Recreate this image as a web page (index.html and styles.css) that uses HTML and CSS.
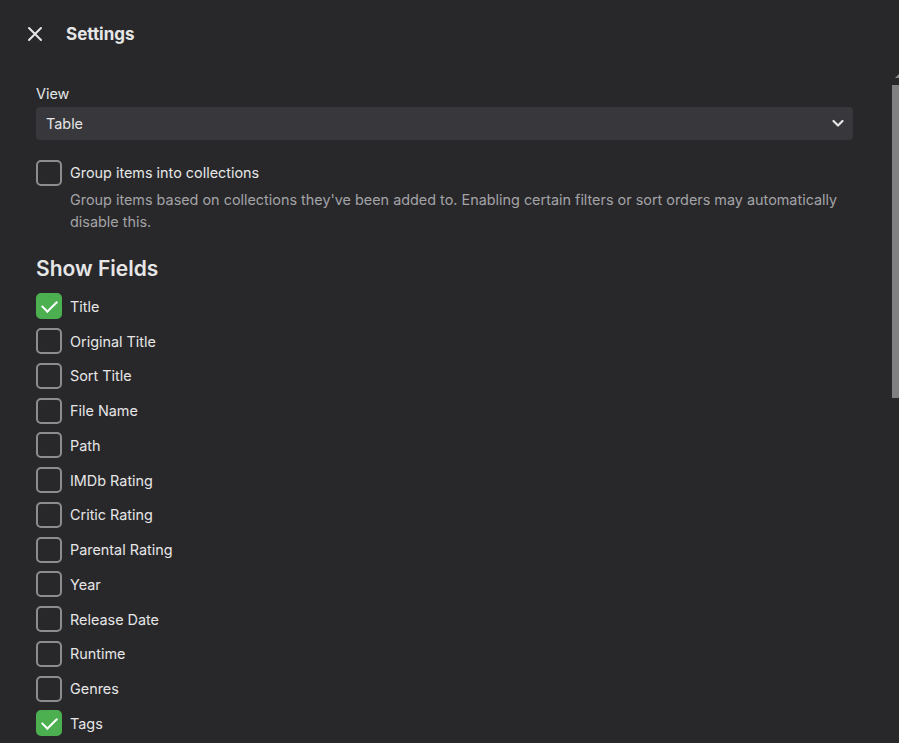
FILE: index.html
```html
<!DOCTYPE html>
<html lang="en">
<head>
<meta charset="utf-8" />
<meta name="viewport" content="width=device-width, initial-scale=1" />
<title>Settings</title>
<link rel="stylesheet" href="styles.css">
</head>
<body>
<header class="top-bar">
<button class="close-btn" aria-label="Close">
<svg width="16" height="16" viewBox="0 0 16 16" fill="none" stroke="currentColor" stroke-width="2" stroke-linecap="round"><path d="M2 2 L14 14 M14 2 L2 14"/></svg>
</button>
<h1 class="top-title">Settings</h1>
</header>

<div class="body-row">
<main class="scroller">
<div class="content">
<label class="field-label" for="view">View</label>
<div class="select-wrap">
<select id="view" class="select">
<option>Table</option>
<option>Poster</option>
<option>List</option>
</select>
<svg class="select-arrow" width="14" height="14" viewBox="0 0 14 14" fill="none" stroke="currentColor" stroke-width="2.2" stroke-linecap="round" stroke-linejoin="round"><path d="M2.5 5 L7 9.5 L11.5 5"/></svg>
</div>

<div class="option">
<label class="check-row">
<input type="checkbox" class="check">
<span class="check-text">Group items into collections</span>
</label>
<p class="option-desc">Group items based on collections they've been added to. Enabling certain filters or sort orders may automatically disable this.</p>
</div>

<h2 class="section-title">Show Fields</h2>
<div class="field-list">
<label class="check-row"><input type="checkbox" class="check" checked><span class="check-text">Title</span></label>
<label class="check-row"><input type="checkbox" class="check"><span class="check-text">Original Title</span></label>
<label class="check-row"><input type="checkbox" class="check"><span class="check-text">Sort Title</span></label>
<label class="check-row"><input type="checkbox" class="check"><span class="check-text">File Name</span></label>
<label class="check-row"><input type="checkbox" class="check"><span class="check-text">Path</span></label>
<label class="check-row"><input type="checkbox" class="check"><span class="check-text">IMDb Rating</span></label>
<label class="check-row"><input type="checkbox" class="check"><span class="check-text">Critic Rating</span></label>
<label class="check-row"><input type="checkbox" class="check"><span class="check-text">Parental Rating</span></label>
<label class="check-row"><input type="checkbox" class="check"><span class="check-text">Year</span></label>
<label class="check-row"><input type="checkbox" class="check"><span class="check-text">Release Date</span></label>
<label class="check-row"><input type="checkbox" class="check"><span class="check-text">Runtime</span></label>
<label class="check-row"><input type="checkbox" class="check"><span class="check-text">Genres</span></label>
<label class="check-row"><input type="checkbox" class="check" checked><span class="check-text">Tags</span></label>
</div>
</div>
</main>
<div class="scroll-rail" aria-hidden="true">
<span class="rail-arrow up"></span>
<div class="rail-track"><div class="rail-thumb"></div></div>
<span class="rail-arrow down"></span>
</div>
</div>
</body>
</html>
```

FILE: styles.css
```css
:root {
--bg: #28282b;
--text: #e6e6e6;
--text-muted: #a3a3a6;
--field-bg: #38383c;
--check-border: #8d8d90;
--green: #4caf50;
}
* {
box-sizing: border-box;
}
html, body {
height: 100%;
}
body {
margin: 0;
background: var(--bg);
color: var(--text);
font-family: Inter, "Noto Sans", sans-serif;
font-size: 14.4px;
display: flex;
flex-direction: column;
overflow: hidden;
}
.top-bar {
height: 70px;
flex: none;
display: flex;
align-items: center;
padding: 0 0 2px 26px;
}
.close-btn {
background: none;
border: none;
color: var(--text);
padding: 0;
width: 18px;
height: 18px;
display: flex;
align-items: center;
justify-content: center;
cursor: pointer;
}
.top-title {
margin: 0 0 0 22px;
font-size: 17px;
font-weight: 700;
}
.body-row {
flex: 1;
min-height: 0;
display: flex;
}
.scroller {
flex: 1;
overflow: hidden;
}
.content {
padding: 14px 39px 20px 36px;
}
.scroll-rail {
width: 7px;
flex: none;
display: flex;
flex-direction: column;
}
.rail-arrow {
height: 15px;
flex: none;
display: flex;
justify-content: flex-end;
}
.rail-arrow.up::after {
content: "";
margin-top: 4px;
width: 0;
height: 0;
border-left: 4px solid transparent;
border-right: 0;
border-bottom: 4px solid #8a8a8a;
}
.rail-track {
flex: 1;
}
.rail-thumb {
height: 313px;
background: #808080;
}
.field-label {
display: block;
font-size: 14.4px;
line-height: 20px;
}
.select-wrap {
position: relative;
margin-top: 3px;
}
.select {
width: 100%;
height: 33px;
appearance: none;
border: none;
border-radius: 4px;
background: var(--field-bg);
color: var(--text);
font: inherit;
padding: 0 10px;
outline: none;
}
.select-arrow {
position: absolute;
right: 8px;
top: 9px;
color: var(--text);
pointer-events: none;
}
.option {
margin-top: 19px;
}
.check-row {
display: flex;
align-items: center;
height: 34.75px;
cursor: pointer;
}
.option .check-row {
height: 27px;
}
.check {
appearance: none;
margin: 0;
width: 26px;
height: 26px;
border: 2px solid var(--check-border);
border-radius: 5px;
flex: none;
display: grid;
place-items: center;
cursor: pointer;
}
.check:checked {
background: var(--green);
border-color: var(--green);
}
.check:checked::after {
content: "";
width: 13px;
height: 7px;
border-left: 2px solid #fff;
border-bottom: 2px solid #fff;
transform: translateY(-2px) rotate(-45deg);
}
.check-text {
margin-left: 8px;
}
.option-desc {
margin: 3px 0 0 34px;
color: var(--text-muted);
font-size: 14.4px;
line-height: 22px;
}
.section-title {
margin: 22px 0 6px;
font-size: 21px;
font-weight: 600;
line-height: 28px;
}
```
